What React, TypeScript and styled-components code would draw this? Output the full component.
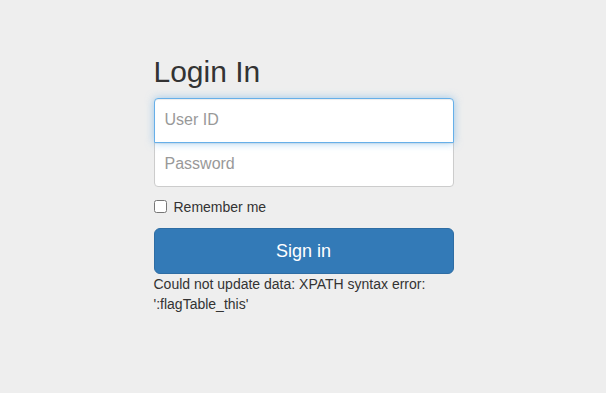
import React, { FC } from 'react';
import styled, { css, createGlobalStyle } from 'styled-components';

const GlobalStyle = createGlobalStyle`
	html, body {
		margin: 0;
		padding: 0;
		background: #eeeeee;
	}
	body {
		font-family: 'Liberation Sans', Arial, Helvetica, sans-serif;
		font-size: 14px;
		line-height: 1.42857143;
		color: #333;
	}
	* {
		box-sizing: border-box;
	}
`;

const App: FC = () => {
	return (
		<>
			<GlobalStyle />
			<Page>
				<SigninForm onSubmit={(e) => e.preventDefault()}>
					<Heading>Login In</Heading>
					<Field type="text" placeholder="User ID" autoFocus $position="top" $active />
					<Field type="password" placeholder="Password" $position="bottom" />
					<CheckboxRow>
						<CheckboxLabel>
							<Checkbox type="checkbox" value="remember-me" />
							Remember me
						</CheckboxLabel>
					</CheckboxRow>
					<SubmitButton type="submit">Sign in</SubmitButton>
					<ErrorText>Could not update data: XPATH syntax error: ':flagTable_this'</ErrorText>
				</SigninForm>
			</Page>
		</>
	);
};

export default App;

const focusRing = css`
	z-index: 2;
	border-color: #66afe9;
	box-shadow: inset 0 1px 1px rgba(0, 0, 0, 0.075), 0 0 8px rgba(102, 175, 233, 0.6);
`;

const Page = styled.div`
	padding: 40px 0 40px 1px;
`;

const SigninForm = styled.form`
	max-width: 330px;
	padding: 15px;
	margin: 0 auto;
	display: flex;
	flex-direction: column;
`;

const Heading = styled.h2`
	margin: 0 0 10px;
	font-size: 30px;
	font-weight: 500;
	line-height: 1.1;
	color: #333;
`;

const Field = styled.input<{ $position: 'top' | 'bottom'; $active?: boolean }>`
	display: block;
	width: 100%;
	height: auto;
	padding: 10px;
	font-family: inherit;
	font-size: 16px;
	line-height: 1.42857143;
	color: #555;
	background: #fff;
	border: 1px solid #ccc;
	border-radius: ${(p) => (p.$position === 'top' ? '4px 4px 0 0' : '0 0 4px 4px')};
	margin-bottom: ${(p) => (p.$position === 'top' ? '-1px' : '10px')};
	box-shadow: inset 0 1px 1px rgba(0, 0, 0, 0.075);
	position: relative;
	outline: 0;
	caret-color: #555;

	&::placeholder {
		color: #999;
		opacity: 1;
	}

	${(p) => p.$active && focusRing}

	&:focus {
		${focusRing}
	}
`;

const CheckboxRow = styled.div`
	min-height: 20px;
	margin: 0 0 10px;
`;

const CheckboxLabel = styled.label`
	display: inline-flex;
	align-items: center;
	font-weight: 400;
	line-height: 20px;
	cursor: pointer;
`;

const Checkbox = styled.input`
	width: 13px;
	height: 13px;
	margin: 0 7px 0 0;
`;

const SubmitButton = styled.button`
	display: block;
	width: 100%;
	padding: 10px 16px;
	font-family: inherit;
	font-size: 18px;
	line-height: 1.3333333;
	color: #fff;
	background-color: #337ab7;
	border: 1px solid #2e6da4;
	border-radius: 6px;
	cursor: pointer;

	&:hover {
		background-color: #286090;
		border-color: #204d74;
	}
`;

const ErrorText = styled.div`
	font-size: 14px;
	line-height: 20px;
	color: #333;
`;
